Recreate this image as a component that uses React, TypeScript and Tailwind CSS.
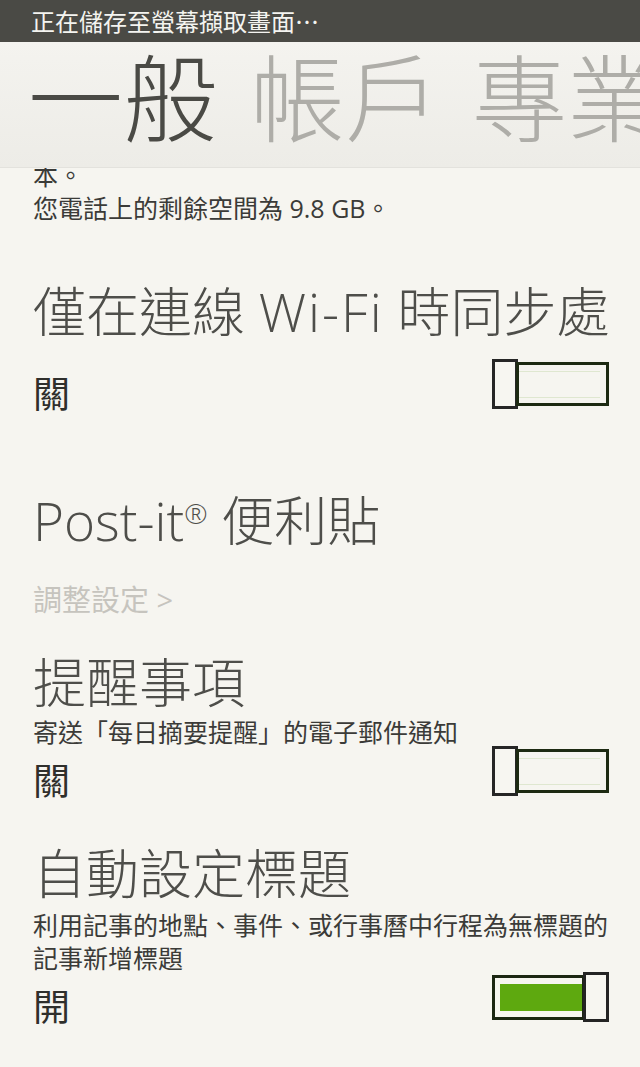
import React from 'react'

const font = { fontFamily: '"Open Sans", "Noto Sans CJK TC", sans-serif' }

function Toggle({ on }: { on: boolean }) {
  if (on) {
    return (
      <div className="flex items-center">
        <div className="h-[45px] w-[93px] border-[3px] border-[#1b2612] pl-[5px] py-[6px] flex">
          <div className="flex-1 bg-[#5ea90f]" />
        </div>
        <div className="h-[50px] w-[26px] -ml-[2px] border-[3px] border-[#242424] bg-[#f7f6f1]" />
      </div>
    )
  }
  return (
    <div className="flex items-center">
      <div className="h-[50px] w-[26px] border-[3px] border-[#262626] bg-[#f7f6f1]" />
      <div className="h-[44px] w-[93px] -ml-[2px] border-[3px] border-[#1d2a12] pt-[6px] pr-[6px]">
        <div className="h-[27px] border-y border-[#dfe7d0]" />
      </div>
    </div>
  )
}

function Row({ label, on, className }: { label: string; on: boolean; className: string }) {
  return (
    <div className={`flex justify-between items-start -mr-[2px] ${className}`}>
      <div className="text-[37px] leading-[40px] mt-[15px] text-[#2f2f2c]">{label}</div>
      <Toggle on={on} />
    </div>
  )
}

export default function App() {
  return (
    <div className="w-[640px] h-[1067px] overflow-hidden bg-[#f6f5f0] flex flex-col" style={font}>
      <div
        className="h-[42px] shrink-0 bg-[#4a4a45] pl-[31px] flex items-center text-[24px] text-[#f4f4f0] leading-none"
        style={{ fontFamily: '"Noto Sans CJK TC", sans-serif' }}
      >
        正在儲存至螢幕擷取畫面…
      </div>
      <div className="relative z-10 h-[126px] shrink-0 bg-gradient-to-b from-[#f4f3ef] to-[#edece7] border-b border-[#e3e2dd] overflow-hidden whitespace-nowrap pl-[28px] pt-[9px] text-[95px] leading-none font-light">
        <span className="text-[#4a4a45]">一般</span>
        <span className="ml-[32px] text-[#aeada8]">帳戶</span>
        <span className="ml-[32px] text-[#aeada8]">專業</span>
      </div>
      <div className="flex-1 overflow-hidden px-[33px]">
        <div className="-mt-[9px] text-[25px] leading-[33px] text-[#3b3b38]">
          <p>本。</p>
          <p>您電話上的剩餘空間為 9.8 GB。</p>
        </div>

        <h2 className="mt-[57px] text-[53px] leading-[60px] font-light text-[#4e4e4a] whitespace-nowrap">
          僅在連線 <span className="tracking-[2px]">Wi-Fi</span> 時同步處
        </h2>
        <Row label="關" on={false} className="mt-[17px]" />

        <h2 className="mt-[77px] h-[60px] text-[53px] leading-[60px] font-light text-[#4e4e4a] whitespace-nowrap">
          Post-it<span className="text-[28px] leading-none align-top inline-block mt-[8px]">®</span> 便利貼
        </h2>
        <div className="mt-[31px] text-[29px] leading-[36px] text-[#c6c4be]">調整設定 &gt;</div>

        <h2 className="mt-[35px] text-[53px] leading-[60px] font-light text-[#4e4e4a]">提醒事項</h2>
        <p className="mt-[3px] text-[25px] leading-[33px] text-[#3b3b38]">
          寄送「每日摘要提醒」的電子郵件通知
        </p>
        <Row label="關" on={false} className="-mt-[3px]" />

        <h2 className="mt-[43px] text-[53px] leading-[60px] font-light text-[#4e4e4a]">自動設定標題</h2>
        <p className="mt-[5px] w-[590px] text-[25px] leading-[33px] text-[#3b3b38]">
          利用記事的地點、事件、或行事曆中行程為無標題的記事新增標題
        </p>
        <Row label="開" on={true} className="-mt-[3px]" />
      </div>
    </div>
  )
}
